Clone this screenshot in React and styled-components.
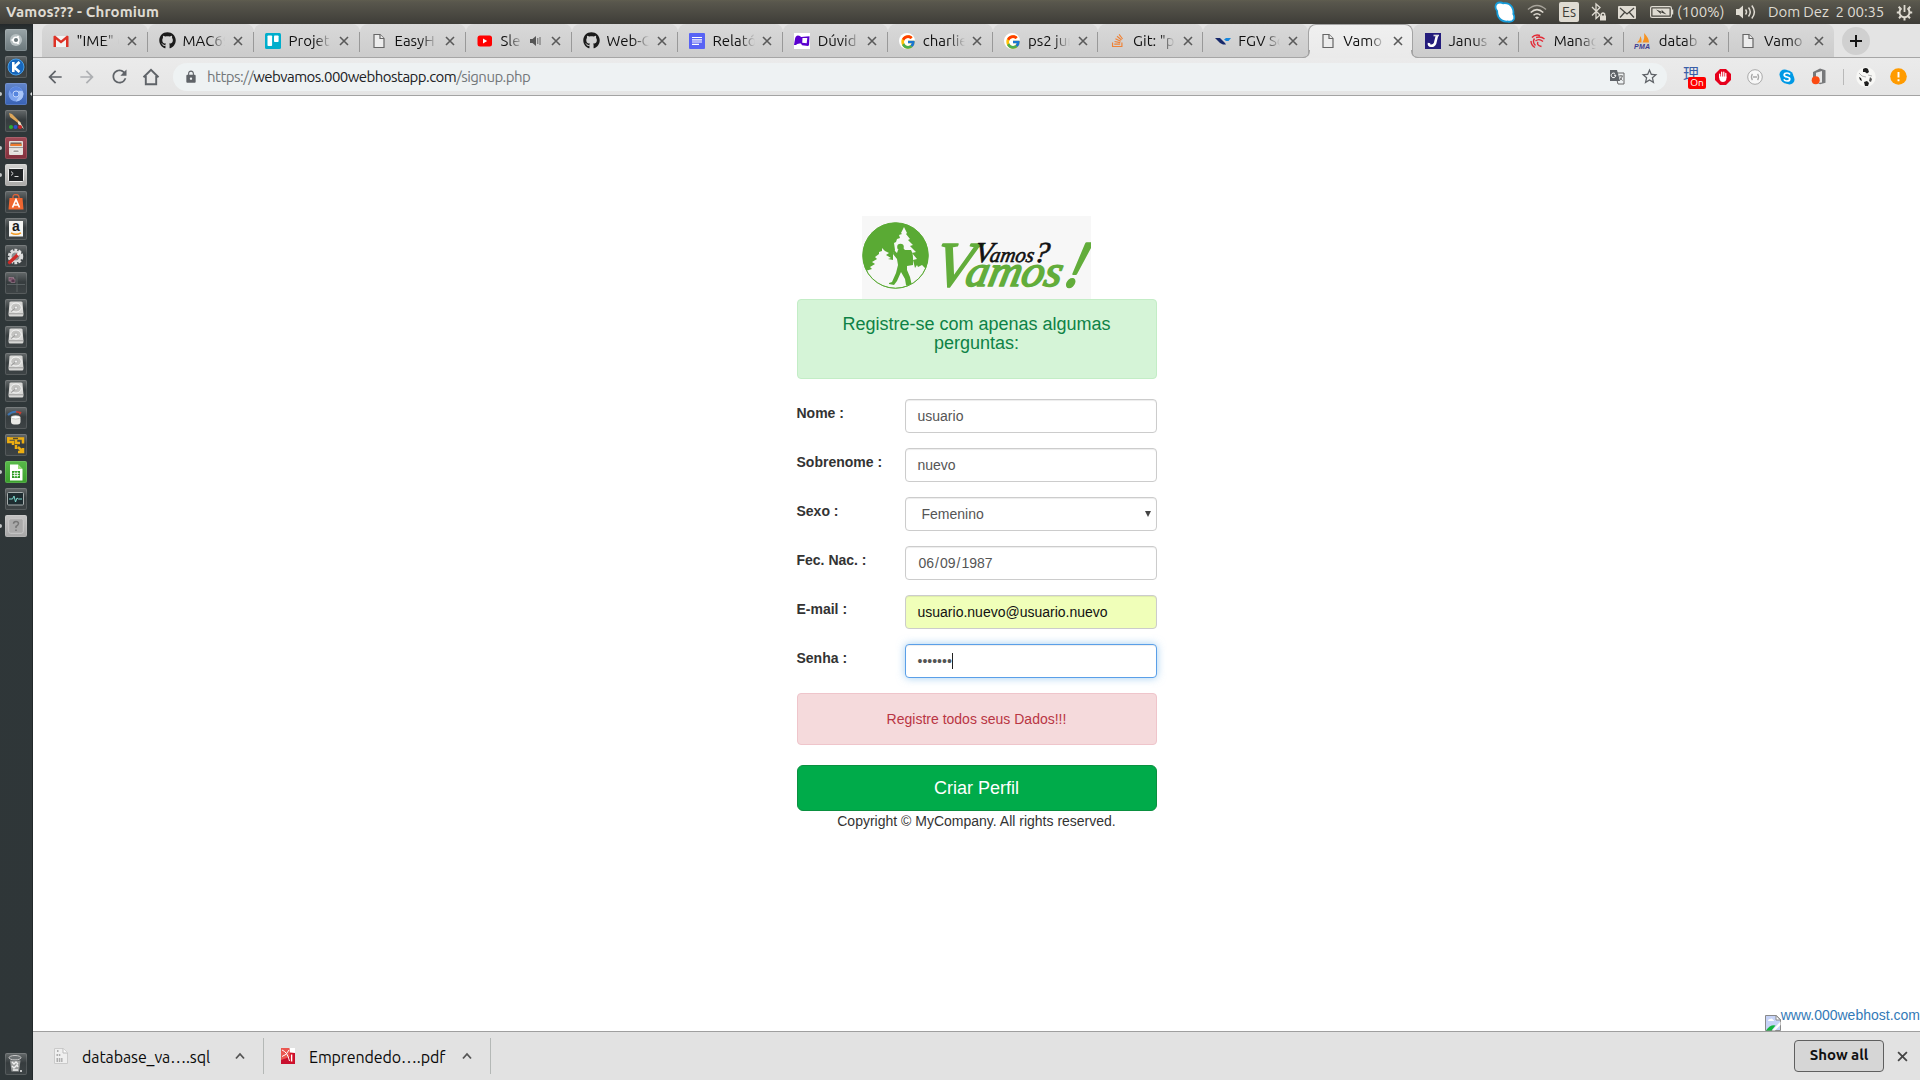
import React from "react";
import styled, { createGlobalStyle, css } from "styled-components";
import { FaGithub, FaStackOverflow } from "react-icons/fa";
import { MdArrowBack, MdArrowForward, MdRefresh, MdStarBorder, MdLock } from "react-icons/md";
import { FcGoogle } from "react-icons/fc";

const UI = `"Ubuntu", "Noto Sans", sans-serif`;
const WEB = `"Liberation Sans", Arial, sans-serif`;

const Global = createGlobalStyle`
  * { box-sizing: border-box; }
  html, body { margin: 0; padding: 0; overflow: hidden; background: #fff; }
  svg { display: block; flex: none; }
`;

const Desktop = styled.div`
  width: 1920px;
  height: 1080px;
  display: flex;
  flex-direction: column;
  overflow: hidden;
  font-family: ${UI};
`;

/* ---------- system panel ---------- */
const Panel = styled.header`
  height: 24px;
  flex: none;
  display: flex;
  align-items: center;
  padding: 0 7px 0 6px;
  background: linear-gradient(#5f5d4f 0, #59574d 2px, #3e3d38 100%);
  color: #dfdbd2;
  font-size: 15px;
`;
const WindowTitle = styled.div`
  font-weight: 700;
  flex: 1;
  line-height: 24px;
  letter-spacing: 0.12px;
`;
const Indicator = styled.div`
  width: ${(p) => p.$w}px;
  height: 24px;
  display: flex;
  align-items: center;
  justify-content: center;
  flex: none;
`;
const PanelText = styled.span`
  white-space: pre;
  line-height: 24px;
  width: ${(p) => p.$w}px;
  letter-spacing: ${(p) => p.$ls || 0}px;
  flex: none;
`;
const Keyboard = styled.span`
  width: 20px;
  height: 20px;
  border-radius: 2px;
  background: #dfdbd2;
  color: #3c3b37;
  font-size: 14px;
  line-height: 20px;
  text-align: center;
`;

/* ---------- launcher ---------- */
const Middle = styled.div`
  flex: 1;
  min-height: 0;
  display: flex;
`;
const Launcher = styled.nav`
  width: 33px;
  flex: none;
  display: flex;
  flex-direction: column;
  align-items: center;
  gap: 5px;
  padding: 5px 1px 5px 0;
  background: linear-gradient(#24292b 0, #2f3739 10px, #2f3638 100%);
  border-right: 1px solid #23292b;
`;
const Tile = styled.div`
  width: 22px;
  height: 22px;
  flex: none;
  position: relative;
  display: flex;
  align-items: center;
  justify-content: center;
  border-radius: 2px;
  background: ${(p) => p.$bg || "linear-gradient(#666b6c, #363c3e 45%, #3e4446)"};
  box-shadow: inset 0 0 0 1px rgba(255, 255, 255, 0.13);
  ${(p) =>
    p.$running &&
    css`
      &::before {
        content: "";
        position: absolute;
        left: -5px;
        top: 9px;
        width: 2px;
        height: 4px;
        background: #c3c7c8;
        border-radius: 0 2px 2px 0;
      }
    `}
  ${(p) =>
    p.$focused &&
    css`
      &::after {
        content: "";
        position: absolute;
        right: -5px;
        top: 9px;
        border: 2px solid transparent;
        border-right-color: #d9dcdd;
        border-left: 0;
      }
    `}
`;
const LauncherGap = styled.div`
  flex: 1;
`;

/* ---------- browser ---------- */
const Browser = styled.main`
  flex: 1;
  min-width: 0;
  display: flex;
  flex-direction: column;
`;
const TabStrip = styled.div`
  height: 34px;
  flex: none;
  display: flex;
  padding-left: 8.5px;
  background: #e4e4e4;
  box-shadow: inset 0 -1px #a6a6a6;
`;
const TabBox = styled.div`
  width: ${(p) => p.$w}px;
  height: 34px;
  flex: none;
  position: relative;
  display: flex;
  align-items: center;
  padding-left: 11.5px;
  border-radius: 8px 8px 0 0;
  border-bottom: 1px solid #a6a6a6;
  background: linear-gradient(#d9d9d9, #cccccc);
  ${(p) =>
    p.$divider &&
    css`
      &::after {
        content: "";
        position: absolute;
        right: 0;
        top: 8px;
        width: 1px;
        height: 20px;
        background: #999;
      }
    `}
  ${(p) =>
    p.$active &&
    css`
      background: linear-gradient(#f0f0f0, #eaeaea);
      border: 1px solid #a3a3a3;
      border-bottom-color: #eaeaea;
      padding-left: 10.5px;
      z-index: 1;
      &::before,
      &::after {
        content: "";
        position: absolute;
        bottom: -1px;
        width: 7px;
        height: 7px;
        border-bottom: 1px solid #a3a3a3;
      }
      &::before {
        left: -7px;
        border-right: 1px solid #a3a3a3;
        border-bottom-right-radius: 7px;
        box-shadow: 2px 2px 0 #eaeaea;
      }
      &::after {
        right: -7px;
        border-left: 1px solid #a3a3a3;
        border-bottom-left-radius: 7px;
        box-shadow: -2px 2px 0 #eaeaea;
      }
    `}
`;
const Favicon = styled.span`
  width: 16px;
  height: 16px;
  flex: none;
  display: flex;
  align-items: center;
  justify-content: center;
`;
const TabTitle = styled.span`
  margin-left: 7.5px;
  width: ${(p) => p.$w || 42}px;
  overflow: hidden;
  white-space: nowrap;
  font-size: 15px;
  line-height: 22px;
  color: #101010;
  -webkit-mask-image: linear-gradient(90deg, #000 calc(100% - 16px), transparent);
  mask-image: linear-gradient(90deg, #000 calc(100% - 16px), transparent);
`;
const CloseSlot = styled.span`
  margin-left: auto;
  margin-right: ${(p) => p.$mr}px;
`;
const NewTab = styled.div`
  width: 28px;
  height: 28px;
  margin: 3px 0 0 8px;
  border-radius: 50%;
  background: #d0d0d0;
  display: flex;
  align-items: center;
  justify-content: center;
`;

const Toolbar = styled.div`
  height: 38px;
  flex: none;
  display: flex;
  align-items: center;
  padding: 0 6px;
  background: linear-gradient(#ebebeb, #e5e5e5);
  border-bottom: 1px solid #a3a3a3;
`;
const ToolButton = styled.span`
  width: 32px;
  height: 28px;
  flex: none;
  display: flex;
  align-items: center;
  justify-content: center;
  color: ${(p) => p.$c || "#5f6368"};
`;
const Omnibox = styled.div`
  width: 1494px;
  height: 28px;
  margin-left: 6px;
  margin-right: 8px;
  flex: none;
  border-radius: 14px;
  background: #eef2f3;
  display: flex;
  align-items: center;
  padding: 0 2px 0 11px;
`;
const Url = styled.span`
  flex: 1;
  margin-left: 9px;
  font-size: 15px;
  letter-spacing: -0.53px;
  color: #73777a;
  b {
    font-weight: 400;
    color: #202124;
  }
`;
const ToolDivider = styled.span`
  width: 1px;
  height: 16px;
  margin: 0 6px 0 8px;
  background: #b9b9b9;
`;
const Kanji = styled.span`
  position: relative;
  font: 400 16px/18px "Noto Sans CJK SC", sans-serif;
  color: #3a5fa8;
  top: -4px;
`;
const Badge = styled.span`
  position: absolute;
  left: 5px;
  top: 13px;
  width: 18px;
  height: 12px;
  border-radius: 2px;
  background: #fe0000;
  color: #fff;
  font: 10px/12px ${UI};
  text-align: center;
`;

/* ---------- page ---------- */
const Page = styled.section`
  flex: 1;
  min-height: 0;
  display: flex;
  flex-direction: column;
  background: #fff;
  font-family: ${WEB};
  font-size: 14px;
  line-height: 20px;
  color: #333;
`;
const Form = styled.form`
  width: 360px;
  margin: 120px 0 0 763.5px;
  display: flex;
  flex-direction: column;
`;
const LogoBox = styled.div`
  width: 229px;
  height: 83px;
  margin-left: 65.5px;
  background: #f7f7f7;
`;
const Alert = styled.div`
  height: ${(p) => p.$h}px;
  padding: 15px;
  border-radius: 4px;
  text-align: center;
  border: 1px solid ${(p) => (p.$danger ? "#efc5cb" : "#c3edc6")};
  background: ${(p) => (p.$danger ? "#f5dadc" : "#d5f4d7")};
  color: ${(p) => (p.$danger ? "#b93543" : "#0e8246")};
  margin-bottom: 20px;
`;
const Heading = styled.h4`
  margin: 0;
  font-weight: 400;
  font-size: 18px;
  line-height: 19px;
`;
const Row = styled.div`
  display: flex;
  justify-content: space-between;
  margin-bottom: 15px;
`;
const Label = styled.label`
  font-weight: 700;
  line-height: 20px;
  padding-top: 4px;
`;
const Field = styled.div`
  width: 252px;
  height: 34px;
  display: flex;
  align-items: center;
  padding: 0 ${(p) => (p.$select ? 5 : 12)}px 0 ${(p) => (p.$select ? 16 : p.$date ? 13 : 12)}px;
  border: 1px solid #ccc;
  border-radius: 4px;
  background: ${(p) => (p.$filled ? "#f0ffb9" : "#fff")};
  color: ${(p) => (p.$filled ? "#111" : "#555")};
  box-shadow: inset 0 1px 1px rgba(0, 0, 0, 0.075);
  ${(p) =>
    p.$focus &&
    css`
      border-color: #5a9fe8;
      box-shadow: inset 0 1px 1px rgba(0, 0, 0, 0.075), 0 0 8px rgba(102, 175, 233, 0.6);
    `}
`;
const Slash = styled.span`
  margin: 0 1px;
`;
const Arrow = styled.span`
  margin-left: auto;
  border: 3px solid transparent;
  border-top: 6px solid #444;
  border-bottom: 0;
`;
const Caret = styled.span`
  width: 1px;
  height: 16px;
  background: #222;
`;
const Submit = styled.button`
  height: 46px;
  padding: 0;
  border: 1px solid #0a9040;
  border-radius: 6px;
  background: #00ab4a;
  color: #fff;
  font: 18px/24px ${WEB};
`;
const Copyright = styled.p`
  margin: 0;
  text-align: center;
`;
const HostLink = styled.a`
  margin-top: auto;
  align-self: flex-end;
  display: flex;
  align-items: flex-end;
  color: #337ab7;
  span {
    margin-bottom: 6px;
  }
`;

/* ---------- downloads ---------- */
const Downloads = styled.footer`
  height: 49px;
  flex: none;
  display: flex;
  align-items: center;
  border-top: 1px solid #9f9f9f;
  background: #e2e2e2;
  padding-right: 12px;
`;
const Download = styled.div`
  width: ${(p) => p.$w}px;
  height: 36px;
  flex: none;
  display: flex;
  align-items: center;
  padding: 0 18px 0 ${(p) => p.$pl}px;
  border-right: 1px solid #b4b8b6;
`;
const FileName = styled.span`
  margin-left: 14px;
  flex: 1;
  font-size: 16px;
  line-height: 22px;
  padding-top: 2px;
  letter-spacing: -0.1px;
  white-space: nowrap;
  color: #0a0a0a;
`;
const ShowAll = styled.button`
  margin-left: auto;
  width: 90px;
  height: 32px;
  padding: 0 0 2px;
  border: 1px solid #5f5f5f;
  border-radius: 4px;
  background: #d6d6d6;
  color: #111;
  font: 700 15px/20px ${UI};
  letter-spacing: -0.05px;
`;
const BarClose = styled.span`
  margin-left: 13px;
`;

/* ---------- drawings ---------- */
const Cross = ({ s = 10, c = "#5a5a5a" }) => (
  <svg width={s} height={s} viewBox="0 0 10 10" stroke={c} strokeWidth="1.6">
    <path d="M1 1l8 8M9 1l-8 8" />
  </svg>
);
const Chevron = () => (
  <svg width="10" height="8" viewBox="0 0 10 8" fill="none" stroke="#555" strokeWidth="1.8">
    <path d="M1 6.5l4-4.5 4 4.5" />
  </svg>
);
const Doc = () => (
  <svg width="16" height="16" viewBox="0 0 16 16" fill="#ededed" stroke="#666" strokeWidth="1.2">
    <path d="M3 1.5h6l4 4v9H3z" />
    <path d="M9 1.5v4h4" />
  </svg>
);
const Gmail = () => (
  <svg width="16" height="16" viewBox="0 0 16 16">
    <path d="M1 3h14v11H1z" fill="#f3f3f3" />
    <path d="M0.5 14V3.2L2 2.4l6 5 6-5 1.5.8V14H13V6.4L8 10.6 3 6.4V14z" fill="#dd3226" />
  </svg>
);
const Trello = () => (
  <svg width="16" height="16" viewBox="0 0 16 16">
    <rect width="16" height="16" rx="1.5" fill="#00aecc" />
    <rect x="2.5" y="2.5" width="4.6" height="10.5" rx=".8" fill="#fff" />
    <rect x="9" y="2.5" width="4.6" height="6.5" rx=".8" fill="#fff" />
  </svg>
);
const YouTube = () => (
  <svg width="16" height="16" viewBox="0 0 16 16">
    <rect x=".5" y="2.5" width="14.5" height="11" rx="2.5" fill="#f00" />
    <path d="M6 5.500v5l4.200-2.500z" fill="#fff" />
  </svg>
);
const GDoc = () => (
  <svg width="16" height="16" viewBox="0 0 16 16">
    <rect width="16" height="16" rx="1" fill="#5863f5" />
    <path d="M3 4.500h10M3 6.800h10M3 9h10M3 11.300h7" stroke="#fff" strokeWidth="1.2" />
  </svg>
);
const Purple = () => (
  <svg width="16" height="16" viewBox="0 0 16 16">
    <rect width="16" height="16" fill="#fff" />
    <path d="M0 12L1 6q.5-3.500 3-3.500Q6.500 2.500 7 4l8.500-.8-.5 9-1 .8-6-.8-1-1.700q-4-.5-5 1.500z" fill="#5a00cf" />
    <path d="M8.500 5h4.800l-.6 5.300-4.500-.5z" fill="#fff" />
  </svg>
);
const GoogleIcon = () => (
  <svg width="16" height="16" viewBox="0 0 16 16">
    <circle cx="8" cy="8" r="8" fill="#fff" />
    <FcGoogle x="1" y="1" width="14" height="14" />
  </svg>
);
const Fgv = () => (
  <svg width="16" height="16" viewBox="0 0 16 16">
    <path d="M0 5h5l5 5 1 1.500H8L5 10z" fill="#17296b" />
    <path d="M9 6.500L11 5h5l-2.500 3H11z" fill="#1787dd" />
  </svg>
);
const Janus = () => (
  <svg width="16" height="16" viewBox="0 0 16 16">
    <rect width="16" height="16" fill="#241c7c" />
    <path d="M12 2.500L10 10.500Q9 13 6 12.800 3.500 12.500 4 10" fill="none" stroke="#fff" strokeWidth="2.6" />
    <path d="M8.500 2.500h5.500" stroke="#ddd" strokeWidth="1.6" />
  </svg>
);
const Manager = () => (
  <svg width="16" height="16" viewBox="0 0 16 16" fill="none" stroke="#e22a36" strokeWidth="1.4">
    <path d="M2 4.500Q5 1 10 2.500M6 4.500Q11 3 14.500 6M5.500 8Q9 5 13 8.500M4.500 5.500Q2 9 5.500 12.500M8 9q-2 3 3.500 4.500M1 8q0 4 4 6.500" />
  </svg>
);
const Pma = () => (
  <svg width="18" height="16" viewBox="0 0 18 16">
    <path d="M3 9.500Q6 7 6.500 3 8 6 7.500 9.500zM8.500 9.500Q11 5 10 0q5 5 5 9.500z" fill="#f69220" />
    <text x="0" y="16" fontSize="7" fontWeight="700" fontStyle="italic" fill="#3b3b90" fontFamily="Liberation Sans" textLength="16">PMA</text>
  </svg>
);
const Speaker = () => (
  <svg width="11" height="12" viewBox="0 0 11 12" fill="#555">
    <path d="M0 4h2.500L6 1v10L2.500 8H0z" />
    <path d="M7.800 3v6M10 2v8" stroke="#666" strokeWidth="1" />
  </svg>
);
const Home = () => (
  <svg width="18" height="18" viewBox="0 0 18 18" fill="none" stroke="#5f6368" strokeWidth="1.9">
    <path d="M1.500 9.200L9 1.800l7.500 7.400M3.800 8v8.300h10.400V8" />
  </svg>
);
const Translate = () => (
  <svg width="16" height="16" viewBox="0 0 16 16">
    <path d="M6 4h9v11H9z" fill="#eef2f3" stroke="#666" strokeWidth="1" />
    <path d="M1 1h7l3 11H1z" fill="#5f6368" />
    <path d="M7 6.200H5M6.800 6.300A2.300 2.300 0 1 1 6 4.600" stroke="#fff" fill="none" strokeWidth="1" />
    <path d="M10 7h4M12 6v1M13.300 7q-.5 3-2.600 4.500M11 8.500q1 2 2.600 3" stroke="#666" fill="none" strokeWidth=".9" />
  </svg>
);
const AdBlock = () => (
  <svg width="16" height="16" viewBox="0 0 16 16">
    <path d="M5 0h6l5 5v6l-5 5H5l-5-5V5z" fill="#e6001c" />
    <path d="M4.700 8V5.200M6.700 7.500V3.200M8.800 7.500V3.200M10.800 8.500V4.500" stroke="#fff" strokeWidth="1.3" strokeLinecap="round" />
    <path d="M4 7.500h7.400V10q-.5 3-3.600 3-2.300 0-3.300-2.500z" fill="#fff" />
  </svg>
);
const Paren = () => (
  <svg width="16" height="16" viewBox="0 0 16 16" fill="none" stroke="#a9a9a9">
    <circle cx="8" cy="8" r="7.3" fill="#f7f7f7" />
    <path d="M5.400 4.800q-2 3.200 0 6.400M10.600 4.800q2 3.200 0 6.400M6 8h4" strokeWidth="1.3" />
  </svg>
);
const SkypeExt = () => (
  <svg width="16" height="16" viewBox="0 0 16 16">
    <circle cx="5.5" cy="5.5" r="5" fill="#0099e5" />
    <circle cx="10.5" cy="10.5" r="5" fill="#0099e5" />
    <circle cx="8" cy="8" r="6.7" fill="#0099e5" />
    <path d="M11 5.500Q10 4 8 4 5.200 4 5.200 6q0 1.500 2.800 2t2.800 2q0 2-2.800 2-2.200 0-3.200-1.600" fill="none" stroke="#fff" strokeWidth="1.7" />
  </svg>
);
const Office = () => (
  <svg width="16" height="17" viewBox="0 0 16 17">
    <path d="M2 4l7-3.500 5.500 1.700v12.500L9 16.300 7 15l4-.5V3L5 4.700v6.600L2 12.500z" fill="#77787a" />
    <circle cx="4.7" cy="12.3" r="4" fill="#fb4a12" />
  </svg>
);
const Avatar = () => (
  <svg width="20" height="20" viewBox="0 0 20 20">
    <circle cx="10" cy="10" r="9.8" fill="#f7f7f5" />
    <path d="M7 2q3-2 5 0l1 3-2 1.500L9 5 7 5zM3 10l2 1 1 3-2-1zM8 15l3-1 2 2-1 3H9z" fill="#1d1d1d" />
    <path d="M14 10l2 2-1 3-2-1z" fill="#555" />
    <path d="M3 6l3 3 4 1M12 8l4 1" stroke="#b5b5b5" fill="none" />
  </svg>
);
const Warn = () => (
  <svg width="17" height="17" viewBox="0 0 17 17">
    <circle cx="8.5" cy="8.5" r="8.3" fill="#ff9b00" />
    <path d="M8.500 4v5.500M8.500 11.300v1.900" stroke="#fff" strokeWidth="1.9" />
  </svg>
);
const SkypeTray = () => (
  <svg width="22" height="22" viewBox="0 0 22 22">
    <path
      d="M1.500 5.500Q2 1.500 6 1.500q2 0 3 .8 6-.8 9 3.700 2 3.500 1.300 7 1.500 2 .7 5-1.500 3.500-6.500 2.500-6 .5-9-4.500-1.500-3-1.300-6Q1.300 8 1.500 5.500z"
      fill="#fff"
      stroke="#169bd8"
      strokeWidth="1.8"
    />
  </svg>
);
const Wifi = () => (
  <svg width="20" height="16" viewBox="0 0 20 16" fill="none" stroke="#dfdbd2" strokeWidth="1.5">
    <path d="M1 5.500Q10-2.500 19 5.500" opacity=".6" />
    <path d="M3.700 8.500Q10 2.700 16.300 8.500M6.500 11.300q3.500-3 7 0" />
    <path d="M8 13.200q2-1.500 4 0L10 15.500z" fill="#dfdbd2" stroke="none" />
  </svg>
);
const Bluetooth = () => (
  <svg width="17" height="20" viewBox="0 0 17 20" fill="none" stroke="#dfdbd2" strokeWidth="1.3">
    <path d="M2 5l8 8-4 3.500V2l4 3.500-8 8" />
    <rect x="10" y="13.5" width="6" height="5" fill="#dfdbd2" stroke="none" />
    <path d="M11.300 14v-2q1.700-2 3.400 0v2" />
  </svg>
);
const Mail = () => (
  <svg width="18" height="13" viewBox="0 0 18 13">
    <rect width="18" height="13" rx="1" fill="#dfdbd2" />
    <path d="M2 2l7 6 7-6M2 11.500l4.500-5M16 11.500l-4.500-5" fill="none" stroke="#45443f" strokeWidth="1.2" />
  </svg>
);
const Battery = () => (
  <svg width="24" height="12" viewBox="0 0 24 12">
    <rect x=".6" y=".6" width="20.8" height="10.8" rx="1.5" fill="none" stroke="#dfdbd2" strokeWidth="1.2" />
    <rect x="2.5" y="2.5" width="17" height="7" fill="#dfdbd2" />
    <path d="M22.500 3.500v5" stroke="#dfdbd2" strokeWidth="1.5" />
    <path d="M6 3.500l6 2.200-.5-2 5 4.800-6-2.200.6 2z" fill="#3f3e39" />
  </svg>
);
const Volume = () => (
  <svg width="21" height="16" viewBox="0 0 21 16" fill="none" stroke="#dfdbd2" strokeWidth="1.5">
    <path d="M0 5h3l4-3.500v13L3 11H0z" fill="#dfdbd2" stroke="none" />
    <path d="M9.500 5.500q2 2.500 0 5M12.500 3.500q3.500 4.500 0 9M15.800 1.500q5.200 6.500 0 13" />
  </svg>
);
const Power = () => (
  <svg width="17" height="17" viewBox="0 0 17 17" fill="none" stroke="#dfdbd2">
    <path d="M5.500 4.300a5 5 0 1 0 6 0" strokeWidth="2" />
    <path d="M8.500 1v7" strokeWidth="1.8" />
    <path d="M.8 8.500h2.500M13.700 8.500h2.500M2.600 2.800l1.800 1.700M14.400 2.800l-1.800 1.700M3 14.200l1.800-1.900M14 14.200l-1.800-1.900M8.500 14v2.500" strokeWidth="2" />
  </svg>
);

const UbuntuIcon = () => (
  <svg width="14" height="14" viewBox="0 0 14 14" fill="none">
    <circle cx="7" cy="7" r="6" fill="#b7c0c2" />
    <circle cx="7" cy="7" r="2.8" stroke="#fff" strokeWidth="1.5" fill="#69767a" />
    <circle cx="3.3" cy="7" r="1" fill="#fff" />
    <circle cx="9" cy="3.8" r="1" fill="#fff" />
    <circle cx="9" cy="10.2" r="1" fill="#fff" />
  </svg>
);
const KIcon = () => (
  <svg width="18" height="18" viewBox="0 0 18 18">
    <circle cx="9" cy="9" r="8" fill="#1767bd" stroke="#4aa0e6" />
    <path d="M6.300 4v10M12.500 4L7 9.300l5.500 4.700" stroke="#fff" strokeWidth="2.6" fill="none" />
  </svg>
);
const Chromium = () => (
  <svg width="16" height="16" viewBox="0 0 16 16">
    <circle cx="8" cy="8" r="7.5" fill="#7da4ee" />
    <path d="M1.500 4.500Q8-3 14.500 4.500H8L5 10z" fill="#5a85dd" />
    <path d="M8 15.500q7-.5 7.500-8l-1-2.500h-4l1 4z" fill="#a9c6f8" />
    <circle cx="8" cy="8" r="3" fill="#5585de" stroke="#c3d6fb" strokeWidth="1" />
  </svg>
);
const Brush = () => (
  <svg width="18" height="18" viewBox="0 0 18 18">
    <path d="M2 1l3 1 9 9-1 1.500L3 5z" fill="#dca65a" />
    <path d="M11 9l2 1 4 7-6-5z" fill="#e9dfca" />
    <circle cx="4" cy="15" r="2" fill="#2daa34" />
    <circle cx="8.5" cy="15" r="2" fill="#2e4fd0" />
    <circle cx="13" cy="15" r="2" fill="#c62626" />
  </svg>
);
const Cabinet = () => (
  <svg width="16" height="16" viewBox="0 0 16 16">
    <rect x="1" y="1" width="14" height="14" rx="1" fill="#e4e1dc" />
    <rect x="2.5" y="2.5" width="11" height="3.5" fill="#67605a" />
    <rect x="2.5" y="3.8" width="11" height="2.2" fill="#ee7b2d" />
    <path d="M1 7.500h14" stroke="#999" />
    <rect x="5" y="10" width="6" height="2.5" rx="1" fill="#a09d98" stroke="#fff" strokeWidth=".7" />
  </svg>
);
const Terminal = () => (
  <svg width="16" height="14" viewBox="0 0 16 14">
    <rect x=".5" y=".5" width="15" height="13" rx="1" fill="#202325" stroke="#efefef" />
    <path d="M3 3.500l2.200 2L3 7.500M6.500 8.500h4" stroke="#ddd" fill="none" />
  </svg>
);
const Bag = () => (
  <svg width="16" height="16" viewBox="0 0 16 16">
    <path d="M5 5V3q0-2.500 3-2.500t3 2.500v2" fill="none" stroke="#df633a" strokeWidth="1.3" />
    <path d="M1.500 4h13l1 11.500H.5z" fill="#ef6630" />
    <path d="M4.500 13.500L8 5.500l3.500 8M5.500 11h5" stroke="#fff" strokeWidth="1.7" fill="none" />
  </svg>
);
const AmazonIcon = () => (
  <svg width="16" height="16" viewBox="0 0 16 16">
    <rect x="1" y="0" width="14" height="15.5" fill="#f4f4f2" />
    <text x="8" y="10.3" fontSize="14" fontWeight="700" textAnchor="middle" fill="#1c1c1c" fontFamily="Liberation Sans">a</text>
    <path d="M3 11.800q5 3 10 0" fill="none" stroke="#f39a21" strokeWidth="1.5" />
  </svg>
);
const Wrench = () => (
  <svg width="17" height="17" viewBox="0 0 17 17">
    <circle cx="8.5" cy="8.5" r="6" fill="#8c9092" stroke="#dcdcdc" strokeWidth="3.5" strokeDasharray="2.6 1.2" />
    <circle cx="8.5" cy="8.5" r="5" fill="none" stroke="#dcdcdc" strokeWidth="2" />
    <path d="M2.500 14.500L11 6.500" stroke="#cf2a28" strokeWidth="3.2" strokeLinecap="round" />
    <path d="M10.500 7l3-3" stroke="#eee" strokeWidth="2.5" />
  </svg>
);
const Workspaces = () => (
  <svg width="20" height="20" viewBox="0 0 20 20">
    <path d="M11 1v18M1 11.500h18" stroke="#62696b" strokeWidth=".8" />
    <rect x="3" y="4.5" width="4.5" height="3.5" fill="#704a60" stroke="#a28594" strokeWidth=".7" />
    <rect x="5" y="6" width="4" height="3.5" fill="#54344a" stroke="#a28594" strokeWidth=".6" />
  </svg>
);
const Disk = () => (
  <svg width="16" height="18" viewBox="0 0 16 18">
    <path d="M1.500 1.500Q2 .5 3 .5h10q1 0 1.500 1l1 11.500q0 2-1 2.500h-13Q.5 15 .5 13z" fill="#d8d8d6" />
    <ellipse cx="8" cy="6.5" rx="5.3" ry="4.5" fill="#c3c3c1" stroke="#f4f4f4" />
    <circle cx="8" cy="6.5" r="1.5" fill="#eee" stroke="#999" strokeWidth=".5" />
    <path d="M1 12.800h14M3 10.500l4-3" stroke="#929292" strokeWidth=".9" />
  </svg>
);
const Database = () => (
  <svg width="17" height="16" viewBox="0 0 17 16">
    <path d="M1 5Q5 1 10 1.800" stroke="#3e75b2" strokeWidth="2" fill="none" />
    <path d="M9 1.800l4.500.8-1 1.800" stroke="#cc3b30" strokeWidth="1.5" fill="none" />
    <rect x="4" y="6" width="9.5" height="8.5" rx="3" fill="#e9e9e5" />
    <ellipse cx="8.7" cy="7.3" rx="4.6" ry="1.7" fill="#fff" stroke="#aaa" strokeWidth=".6" />
  </svg>
);
const Vmware = () => (
  <svg width="18" height="18" viewBox="0 0 18 18" fill="none" stroke="#edae12" strokeWidth="2.5">
    <path d="M1 2.500h15v5M1.300 1v5H6v3M9 3v4h4M16 12v4h-5M16 16l-5-5M9 9v4" />
    <path d="M6 2.500h5" stroke="#574c2b" strokeWidth="1.5" />
  </svg>
);
const Calc = () => (
  <svg width="14" height="17" viewBox="0 0 14 17">
    <path d="M1 .5h8l4.500 4.500v11.500H1z" fill="#fff" />
    <path d="M9 .5v4.500h4.500z" fill="#9ade78" />
    <rect x="3" y="7" width="8" height="7" fill="#2c9b22" />
    <path d="M3.500 9.300h7M3.500 11.600h7M5.700 7.500v6M8.300 7.500v6" stroke="#fff" strokeWidth=".9" />
  </svg>
);
const Monitor = () => (
  <svg width="17" height="14" viewBox="0 0 17 14">
    <rect x=".5" y=".5" width="16" height="12.5" rx="1" fill="#1e2c30" stroke="#a7aeae" />
    <path d="M2 7h3.500L7 4l1.500 6L10 6l1.500 1H15" fill="none" stroke="#7cd9cf" />
  </svg>
);
const Question = () => (
  <svg width="16" height="16" viewBox="0 0 16 16">
    <rect x=".7" y=".7" width="14.6" height="14.6" rx="2" fill="#aaa" stroke="#c8c8c8" />
    <path d="M5.500 5.700Q5.700 3.500 8 3.500t2.500 2Q10.500 7 8 8.500V10M8 11.500v1.600" fill="none" stroke="#777" strokeWidth="1.5" />
  </svg>
);
const Trash = () => (
  <svg width="15" height="18" viewBox="0 0 15 18">
    <ellipse cx="7" cy="2.7" rx="6" ry="2.2" fill="#6b7072" stroke="#c9c9c9" />
    <path d="M2 5.500h10.500l-1.500 11H3.500z" fill="#9a9c9c" />
    <path d="M4 7l2 2 2-2 2 2M4 11l2 2 3-3 1 2M5 15h5M12 16h2" stroke="#eee" strokeWidth="1.4" fill="none" />
  </svg>
);
const SqlFile = () => (
  <svg width="14" height="16" viewBox="0 0 14 16">
    <path d="M.5 .5h9l4 4v11H.5z" fill="#efefef" stroke="#cacaca" />
    <path d="M9 .5v4.500h4.500" fill="#fafafa" stroke="#bbb" />
    <path d="M3 3h1.500M2.500 7h4M2.500 11h6M2.500 13h6" stroke="#999" strokeWidth="1.3" strokeDasharray="1.5 .8" />
  </svg>
);
const PdfFile = () => (
  <svg width="14" height="16" viewBox="0 0 14 16">
    <rect width="14" height="16" fill="#c8102e" />
    <path d="M0 0h9v9L0 12z" fill="#ea5650" />
    <path d="M1 2q5.500 2 7.500 11M1 8.500Q5.500 7.500 8 2" stroke="#fff" fill="none" strokeWidth="1" />
    <path d="M8.500 5.500L12.500 5v10H9.200z" fill="#d71328" />
    <path d="M8.500 0H14v5l-5-.5z" fill="#fff" />
    <path d="M10.600 6.500v7" stroke="#fff" strokeWidth="1.4" />
  </svg>
);
const BrokenImage = () => (
  <svg width="16" height="16" viewBox="0 0 16 16">
    <path d="M.5 .5h11l4 4v11H.5z" fill="#c6d3f7" stroke="#8a8a8a" />
    <path d="M11 .5v4.500h4.500z" fill="#fff" stroke="#8a8a8a" />
    <path d="M3 6q0-2 2-2 2-1.500 3 .8 1.300.2 1 1.200z" fill="#fff" />
    <path d="M1 15.500q4-6 9.500-5L6.500 15.500z" fill="#12b53e" />
    <path d="M15.500 6.500L7 15.500h3l5.500-5.500z" fill="#fff" />
  </svg>
);

const Logo = () => (
  <svg width="229" height="83" viewBox="0 0 229 83">
    <defs>
      <clipPath id="disc">
        <circle cx="33.5" cy="39.5" r="32.5" />
      </clipPath>
    </defs>
    <circle cx="33.5" cy="39.5" r="33" fill="#5aaa34" />
    <g clipPath="url(#disc)">
      <path
        fill="#f7f7f7"
        d="M42 11l3 6-1 1 4 5-2 1 5 5-3 1 6 6-4 1 5 6-4 1 2 8 2-3 1 2 4-2 3 3 4-1v30H0V56l10-3-2-2 5-3-3-2 5-3-2-2 4-3 0-2 3-1 0-3 3 3 4 2-3 2 5 3-3 1 5 1 0-6 2-4-1-7 2-1 1-3 3-1-1-3 3-1-1-1 3-6z"
      />
      <circle cx="38.5" cy="31" r="3.3" fill="#5aaa34" />
      <path
        fill="#5aaa34"
        d="M36 34l5-2 2 2 6 0q2 3 2 8l0 7-6 1 0 4 3 7 2 9-3 2-3-3-1-6-4-7-4 9-3 4-5-1 0-1 3-1 4-9 2-8-1-6-4-5 1-4 3 3z"
      />
    </g>
    <circle cx="33.5" cy="39.5" r="32.7" fill="none" stroke="#5aaa34" strokeWidth="1" />
    <g fontFamily="'Liberation Serif', serif" fontStyle="italic">
      <g fill="#62ad3b" stroke="#62ad3b" strokeWidth="1.7" strokeLinejoin="round">
        <text transform="translate(70 69.5) skewX(-10)" fontSize="64" textLength="38" lengthAdjust="spacingAndGlyphs">V</text>
        <text transform="translate(102 69.5) skewX(-12)" fontSize="44" textLength="96" lengthAdjust="spacingAndGlyphs">amos</text>
        <text transform="translate(200 69.5) skewX(-18)" fontSize="65" textLength="19" lengthAdjust="spacingAndGlyphs" strokeWidth="2.5">!</text>
      </g>
      <g fill="#111" stroke="#111" strokeWidth=".6">
        <text transform="translate(112 45.5) skewX(-8)" fontSize="29" textLength="18" lengthAdjust="spacingAndGlyphs">V</text>
        <text transform="translate(127 45.5) skewX(-10)" fontSize="21" textLength="44" lengthAdjust="spacingAndGlyphs">amos</text>
        <text transform="translate(171 45.5) skewX(-10)" fontSize="29" textLength="15" lengthAdjust="spacingAndGlyphs">?</text>
      </g>
    </g>
  </svg>
);

const tiles = [
  { icon: <UbuntuIcon />, bg: "linear-gradient(#9aa5a8, #6b787c)" },
  { icon: <KIcon /> },
  { icon: <Chromium />, bg: "linear-gradient(#6285c9, #3862b4)", running: true, focused: true },
  { icon: <Brush /> },
  { icon: <Cabinet />, bg: "linear-gradient(#a04a56, #82303c)", running: true },
  { icon: <Terminal />, bg: "linear-gradient(#d2d2d0, #a9a9a7)", running: true },
  { icon: <Bag /> },
  { icon: <AmazonIcon /> },
  { icon: <Wrench /> },
  { icon: <Workspaces /> },
  { icon: <Disk /> },
  { icon: <Disk /> },
  { icon: <Disk /> },
  { icon: <Disk /> },
  { icon: <Database /> },
  { icon: <Vmware /> },
  { icon: <Calc />, bg: "linear-gradient(#58b94a, #3a9f2c)", running: true },
  { icon: <Monitor /> },
  { icon: <Question />, bg: "linear-gradient(#c4c4c4, #a6a6a6)", running: true },
];

const tabs = [
  { icon: <Gmail />, title: '"IME" (' },
  { icon: <FaGithub size={17} color="#1b1b1b" />, title: "MAC69" },
  { icon: <Trello />, title: "Projet" },
  { icon: <Doc />, title: "EasyH" },
  { icon: <YouTube />, title: "Sle", audio: true },
  { icon: <FaGithub size={17} color="#1b1b1b" />, title: "Web-C" },
  { icon: <GDoc />, title: "Relató" },
  { icon: <Purple />, title: "Dúvid" },
  { icon: <GoogleIcon />, title: "charlie" },
  { icon: <GoogleIcon />, title: "ps2 jun" },
  { icon: <FaStackOverflow size={15} color="#ef8236" />, title: 'Git: "p' },
  { icon: <Fgv />, title: "FGV So" },
  { icon: <Doc />, title: "Vamo", active: true },
  { icon: <Janus />, title: "Janus" },
  { icon: <Manager />, title: "Manag" },
  { icon: <Pma />, title: "datab" },
  { icon: <Doc />, title: "Vamo" },
];

export default function App() {
  return (
    <Desktop>
      <Global />
      <Panel>
        <WindowTitle>Vamos??? - Chromium</WindowTitle>
        <Indicator $w={32}><SkypeTray /></Indicator>
        <Indicator $w={32}><Wifi /></Indicator>
        <Indicator $w={32}><Keyboard>Es</Keyboard></Indicator>
        <Indicator $w={26}><Bluetooth /></Indicator>
        <Indicator $w={32}><Mail /></Indicator>
        <Indicator $w={4} />
        <Indicator $w={30}><Battery /></Indicator>
        <PanelText $w={56}>(100%)</PanelText>
        <Indicator $w={26}><Volume /></Indicator>
        <Indicator $w={9} />
        <PanelText $w={128} $ls={-0.1}>{"Dom Dez  2 00:35"}</PanelText>
        <Indicator $w={17}><Power /></Indicator>
      </Panel>
      <Middle>
        <Launcher>
          {tiles.map((t, i) => (
            <Tile key={i} $bg={t.bg} $running={t.running} $focused={t.focused}>{t.icon}</Tile>
          ))}
          <LauncherGap />
          <Tile><Trash /></Tile>
        </Launcher>
        <Browser>
          <TabStrip>
            {tabs.map((t, i) => (
              <TabBox
                key={i}
                $w={i < 6 ? 106 : 105.15}
                $active={t.active}
                $divider={!t.active && i !== 11 && i !== 16}
              >
                <Favicon>{t.icon}</Favicon>
                <TabTitle $w={t.audio ? 22 : 42}>{t.title}</TabTitle>
                {t.audio && <CloseSlot $mr={2}><Speaker /></CloseSlot>}
                <CloseSlot $mr={t.active ? 9 : 10.5}><Cross /></CloseSlot>
              </TabBox>
            ))}
            <NewTab>
              <svg width="12" height="12" viewBox="0 0 12 12" stroke="#151515" strokeWidth="2">
                <path d="M6 0v12M0 6h12" />
              </svg>
            </NewTab>
          </TabStrip>
          <Toolbar>
            <ToolButton><MdArrowBack size={20} /></ToolButton>
            <ToolButton $c="#adafb2"><MdArrowForward size={20} /></ToolButton>
            <ToolButton><MdRefresh size={21} /></ToolButton>
            <ToolButton><Home /></ToolButton>
            <Omnibox>
              <MdLock size={14} color="#5f6368" />
              <Url>https://<b>webvamos.000webhostapp.com</b>/signup.php</Url>
              <ToolButton><Translate /></ToolButton>
              <ToolButton><MdStarBorder size={19} /></ToolButton>
            </Omnibox>
            <ToolButton><Kanji>理<Badge>On</Badge></Kanji></ToolButton>
            <ToolButton><AdBlock /></ToolButton>
            <ToolButton><Paren /></ToolButton>
            <ToolButton><SkypeExt /></ToolButton>
            <ToolButton><Office /></ToolButton>
            <ToolDivider />
            <ToolButton><Avatar /></ToolButton>
            <ToolButton><Warn /></ToolButton>
          </Toolbar>
          <Page>
            <Form>
              <LogoBox><Logo /></LogoBox>
              <Alert $h={80}>
                <Heading>Registre-se com apenas algumas perguntas:</Heading>
              </Alert>
              <Row><Label>Nome :</Label><Field>usuario</Field></Row>
              <Row><Label>Sobrenome :</Label><Field>nuevo</Field></Row>
              <Row><Label>Sexo :</Label><Field $select>Femenino<Arrow /></Field></Row>
              <Row>
                <Label>Fec. Nac. :</Label>
                <Field $date>06<Slash>/</Slash>09<Slash>/</Slash>1987</Field>
              </Row>
              <Row><Label>E-mail :</Label><Field $filled>usuario.nuevo@usuario.nuevo</Field></Row>
              <Row><Label>Senha :</Label><Field $focus>•••••••<Caret /></Field></Row>
              <Alert $danger $h={52}>Registre todos seus Dados!!!</Alert>
              <Submit type="button">Criar Perfil</Submit>
              <Copyright>Copyright © MyCompany. All rights reserved.</Copyright>
            </Form>
            <HostLink><BrokenImage /><span>www.000webhost.com</span></HostLink>
          </Page>
          <Downloads>
            <Download $w={231} $pl={21}>
              <SqlFile /><FileName>database_va….sql</FileName><Chevron />
            </Download>
            <Download $w={227} $pl={17}>
              <PdfFile /><FileName>Emprendedo….pdf</FileName><Chevron />
            </Download>
            <ShowAll>Show all</ShowAll>
            <BarClose><Cross s={11} c="#444" /></BarClose>
          </Downloads>
        </Browser>
      </Middle>
    </Desktop>
  );
}
